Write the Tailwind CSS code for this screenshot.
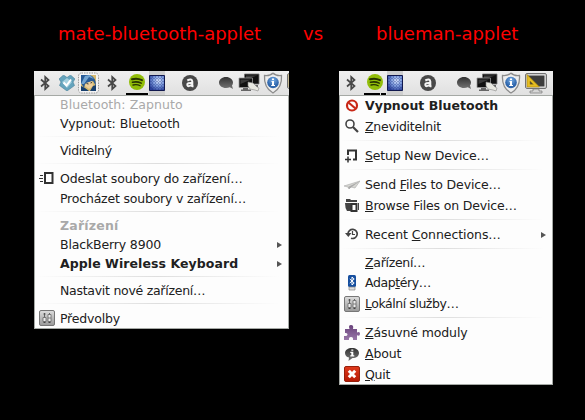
<!DOCTYPE html>
<html lang="cs">
<head>
<meta charset="utf-8">
<title>Bluetooth applets</title>
<script src="https://cdn.jsdelivr.net/npm/@tailwindcss/browser@4"></script>
</head>
<body class="w-[585px] h-[420px] overflow-hidden bg-black font-['DejaVu_Sans','Noto_Sans',sans-serif] text-[12.5px] leading-[19px] text-[#202020] whitespace-nowrap">
<svg class="absolute w-0 h-0">
  <defs>
    <linearGradient id="dk" x2="0" y2="1"><stop stop-color="#333"/><stop offset="1" stop-color="#777"/></linearGradient>
    <linearGradient id="metal" x2="0" y2="1"><stop stop-color="#ddd"/><stop offset="1" stop-color="#999"/></linearGradient>
    <linearGradient id="redg" x2="0" y2="1"><stop stop-color="#e03a1c"/><stop offset="1" stop-color="#b51a05"/></linearGradient>
    <linearGradient id="pur" x2="0" y2="1"><stop stop-color="#68417a"/><stop offset="1" stop-color="#9a78aa"/></linearGradient>
    <radialGradient id="grid" cx=".6" cy=".35" r=".7"><stop stop-color="#d5e2fb"/><stop offset=".5" stop-color="#7c9adb"/><stop offset="1" stop-color="#2a3f98"/></radialGradient>
    <radialGradient id="blu" cy=".3"><stop stop-color="#79aee5"/><stop offset="1" stop-color="#2f66ac"/></radialGradient>
  </defs>
  <symbol id="bt" viewBox="0 0 12 18"><path d="M2 5.500 9.500 12 6.200 15V3l3.300 3L2 12.500" fill="none" stroke="#484848" stroke-width="1.7"/></symbol>
  <symbol id="spot" viewBox="0 0 22 24"><circle cx="11" cy="11" r="8" fill="#91bd09"/><g fill="none" stroke="#273400" stroke-linecap="round"><path d="M6 8.300q5-1.600 10 .8" stroke-width="2"/><path d="M6.500 11.300q4.500-1.200 8.700.8" stroke-width="1.600"/><path d="M7 14q4-1 7.200.7" stroke-width="1.300"/></g></symbol>
  <symbol id="gridicon" viewBox="0 0 16 24"><path fill="#cfcfcf" d="M0 0h16v24H0z"/><path fill="url(#grid)" stroke="#10184e" d="M.5 4.500h15v15H.5z"/><path d="M3.500 5v14M6.500 5v14M9.500 5v14M12.500 5v14M1 7.500h14M1 10.500h14M1 13.500h14M1 16.500h14" stroke="#1d3185" stroke-opacity=".35" stroke-dasharray="2 1"/></symbol>
  <symbol id="acirc" viewBox="0 0 16 16"><circle cx="8" cy="8" r="8" fill="#494949"/><path d="M5.300 5.500q4.700-2.600 5 1.200V12M10.300 8Q5 7.500 5.300 10q.7 2.500 5-.5M10 11.300h1.500" fill="none" stroke="#f4f4f4" stroke-width="2"/></symbol>
  <symbol id="bub" viewBox="0 0 14 14"><path d="M7 1C3 1 0 3.500 0 6.500S3 12 7 12c1.500 0 2.800-.3 3.800-.8L14 13l-1-3.500c.6-.8 1-1.800 1-3C14 3.500 11 1 7 1" fill="url(#dk)"/></symbol>
  <symbol id="mon" viewBox="0 0 22 20"><path fill="#111" stroke="#777" stroke-width=".8" d="M6.500 1h14.500v10H6.500z"/><path fill="#3c3c3c" d="M8 2.500h11.500L8 6z"/><path fill="#111" stroke="#999" stroke-width=".8" d="M1 5h13.500v9.500H1z"/><path fill="#393939" d="M2.500 6.500H13L2.500 11z"/><path fill="#666" d="M5 15h5v1.500h3V18H3v-1.500h2zM14 12h6v2h-6z"/><path d="m10 9 5 1 4 4 2 1-1 3-3-1-5-1-2-3z" fill="#e9e9e2" stroke="#888" stroke-width=".6"/></symbol>
  <symbol id="shield" viewBox="0 0 20 22"><path d="M10 1Q7.500 4 1.500 3.500C1 11 3 17 10 21c7-4 9-10 8.500-17.500Q12.500 4 10 1" fill="#eee" stroke="#8c8c8c" stroke-width="1.300"/><circle cx="10" cy="10.500" r="5.800" fill="url(#blu)"/><path d="M9 6.500h2V8H9zM8.500 9H11v4h1v1H8.200v-1H9v-3h-.5z" fill="#fff"/></symbol>
  <symbol id="desk" viewBox="0 0 22 22"><rect x=".7" y="1.700" width="20.600" height="14.600" rx="1" fill="#eee" stroke="#555"/><path fill="#3d3d3d" d="M2.500 3.500h17v11h-17z"/><path d="M2 2.500 14.500 15H2zM5 9v3.300h3.300z" fill="#e5bd22" stroke="#a98508" stroke-width=".6" fill-rule="evenodd"/><path d="M8 17h6v2h3v2H5v-2h3z" fill="#d6d6d6" stroke="#777" stroke-width=".7"/></symbol>
  <symbol id="slid" viewBox="0 0 16 16"><rect x=".5" y=".5" width="15" height="15" rx="1.500" fill="url(#metal)" stroke="#777"/><path d="M5.500 3v10M10.500 3v10" stroke="#666"/><path d="M4 7.500h3v4H4zM9 4.500h3v7H9zM9 8h3" fill="#eee" stroke="#666" stroke-width=".8"/><path d="M4.500 4h2M4.500 12.500h2M9.500 12.500h2" stroke="#444"/></symbol>
</svg>

<header class="h-[71px] flex pt-[23px] pl-[58px] text-[18px] leading-[21px] text-[#ff0000]">
  <h1 class="w-[245px]">mate-bluetooth-applet</h1>
  <span class="w-[73px]">vs</span>
  <h1>blueman-applet</h1>
</header>

<main class="flex items-start pl-[34px] gap-[50px]">
  <section class="w-[255px] overflow-hidden">
    <div class="h-[24px] flex items-center bg-linear-to-b from-[#efefef] to-[#e1e1e1] pl-[5px] *:shrink-0">
      <svg class="w-[12px] h-[18px]"><use href="#bt"/></svg>
      <svg class="w-[16px] h-[16px] ml-[8px]" viewBox="0 0 16 16"><path d="m4.500 0 3.500 2.500L11.500 0 16 4l-2 3 1.500 3.500L8 16 .5 10.500 2 7 0 4z" fill="#65a4bd" stroke="#487f98" stroke-width=".6"/><path d="m8 3 5 4-5 6-5-6z" fill="#a5d0df"/><path d="m4.500 7.500 3 3L12 4.500" fill="none" stroke="#fff" stroke-width="2"/></svg>
      <svg class="w-[21px] h-[22px] ml-[3px]" viewBox="0 0 21 22"><rect x=".5" y="1" width="20" height="20" rx="3" fill="#f3f3f3" stroke="#999" stroke-dasharray="1.500 1"/><path fill="#d5b96f" d="M3 3h15v16H3z"/><path d="M3 3h9q6 2 6 11l-3-5-8 3-1 4-3-5z" fill="#285b96"/><path d="M3 12l4-8 5-1 4 4-5-2-5 7z" fill="#73a5d2"/><path d="m8 11 6-2 1 5-4 3-4-3z" fill="#edcf9c"/><path d="M3 14q5 2 8 5H3zM15 14l3-1v6h-6z" fill="#173f6e"/><path d="m8.500 11.500 2 .5m2-1 1.500-.5" stroke="#333"/></svg>
      <svg class="w-[12px] h-[18px] ml-[7px]"><use href="#bt"/></svg>
      <div class="w-[22px] h-[24px] ml-[8px] flex flex-col"><svg class="w-[22px] h-[24px] -mb-[2px] shrink-0"><use href="#spot"/></svg><div class="h-[2px] shrink-0 bg-black"></div></div>
      <svg class="w-[16px] h-[24px] ml-[1px]"><use href="#gridicon"/></svg>
      <svg class="w-[16px] h-[16px] ml-[17px]"><use href="#acirc"/></svg>
      <svg class="w-[14px] h-[14px] ml-[21px]"><use href="#bub"/></svg>
      <svg class="w-[22px] h-[20px] ml-[5px]"><use href="#mon"/></svg>
      <svg class="w-[20px] h-[22px] ml-[3px]"><use href="#shield"/></svg>
      <svg class="w-[22px] h-[22px] ml-[4px]"><use href="#desk"/></svg>
    </div>
    <div class="h-[234px] bg-[#fdfdfd] border border-[#a5a9a5] flex flex-col *:shrink-0">
      <div class="h-[16px] mb-[2px] flex items-center pl-[25px] text-[#a9a9a9] tracking-[0.07px]">Bluetooth: Zapnuto</div>
      <div class="h-[19px] flex items-center pl-[25px] tracking-[-0.05px]"><span>Vypnout: Bluetooth</span></div>
      <div class="h-[8px] pt-[3px] pr-[8px]"><div class="h-px bg-linear-to-r from-transparent via-[#dedede] to-transparent"></div></div>
      <div class="h-[19px] flex items-center pl-[25px] tracking-[-0.3px]"><span>Viditelný</span></div>
      <div class="h-[8px] pt-[3px] pr-[8px]"><div class="h-px bg-linear-to-r from-transparent via-[#dedede] to-transparent"></div></div>
      <div class="h-[20px] flex items-center pl-[4px] tracking-[-0.15px]"><svg class="w-[16px] h-[14px] mr-[5px]" viewBox="0 0 16 14"><path d="M6 2h7.500v10H6z" fill="#fff" stroke="#333" stroke-width="2"/><path d="M1 4.500h3M0 7.500h4M1 10.500h3" stroke="#333"/></svg><span>Odeslat soubory do zařízení…</span></div>
      <div class="h-[20px] flex items-center pl-[25px] tracking-[-0.2px]"><span>Procházet soubory v zařízení…</span></div>
      <div class="h-[8px] pt-[3px] pr-[8px]"><div class="h-px bg-linear-to-r from-transparent via-[#dedede] to-transparent"></div></div>
      <div class="h-[19px] flex items-center pl-[25px] font-bold text-[#a9a9a9] tracking-[0.2px]"><span>Zařízení</span></div>
      <div class="h-[19px] flex items-center justify-between pl-[25px] pr-[6px] tracking-[-0.15px]"><span>BlackBerry 8900</span><svg class="w-[5px] h-[6px]" viewBox="0 0 5 6"><path d="m0 0 5 3-5 3z" fill="#555"/></svg></div>
      <div class="h-[19px] flex items-center justify-between pl-[25px] pr-[6px] tracking-[0.07px]"><span class="font-bold">Apple Wireless Keyboard</span><svg class="w-[5px] h-[6px]" viewBox="0 0 5 6"><path d="m0 0 5 3-5 3z" fill="#555"/></svg></div>
      <div class="h-[8px] pt-[3px] pr-[8px]"><div class="h-px bg-linear-to-r from-transparent via-[#dedede] to-transparent"></div></div>
      <div class="h-[19px] flex items-center pl-[25px] tracking-[-0.27px]"><span>Nastavit nové zařízení…</span></div>
      <div class="h-[8px] pt-[3px] pr-[8px]"><div class="h-px bg-linear-to-r from-transparent via-[#dedede] to-transparent"></div></div>
      <div class="h-[20px] flex items-center pl-[4px] tracking-[-0.2px]"><svg class="w-[16px] h-[16px] mr-[5px]"><use href="#slid"/></svg><span>Předvolby</span></div>
    </div>
  </section>

  <section class="w-[214px] overflow-hidden">
    <div class="h-[24px] flex items-center bg-linear-to-b from-[#efefef] to-[#e1e1e1] pl-[6px] *:shrink-0">
      <svg class="w-[12px] h-[18px]"><use href="#bt"/></svg>
      <div class="w-[22px] h-[24px] ml-[7px] flex flex-col"><svg class="w-[22px] h-[24px] -mb-[2px] shrink-0"><use href="#spot"/></svg><div class="h-[2px] shrink-0 flex gap-px"><i class="w-[16px] bg-black"></i><i class="w-[5px] bg-black"></i></div></div>
      <svg class="w-[16px] h-[24px] ml-[1px]"><use href="#gridicon"/></svg>
      <svg class="w-[16px] h-[16px] ml-[17px]"><use href="#acirc"/></svg>
      <svg class="w-[14px] h-[14px] ml-[21px]"><use href="#bub"/></svg>
      <svg class="w-[22px] h-[20px] ml-[5px]"><use href="#mon"/></svg>
      <svg class="w-[20px] h-[22px] ml-[3px]"><use href="#shield"/></svg>
      <svg class="w-[22px] h-[22px] ml-[4px]"><use href="#desk"/></svg>
    </div>
    <div class="h-[290px] bg-[#fdfdfd] border border-[#a5a9a5] flex flex-col *:shrink-0">
      <div class="h-[19px] flex items-center pl-[4px] tracking-[0.03px]"><svg class="w-[16px] h-[16px] mr-[5px]" viewBox="0 0 16 16"><circle cx="8" cy="7.500" r="5" fill="#fff" stroke="#c92817" stroke-width="2.200"/><path d="m4.500 4.500 7 6" stroke="#c92817" stroke-width="2.200"/></svg><span class="font-bold">Vypnout Bluetooth</span></div>
      <div class="h-[22px] flex items-center pl-[4px] tracking-[-0.23px]"><svg class="w-[16px] h-[16px] mr-[5px]" viewBox="0 0 16 16"><circle cx="6" cy="6" r="4" fill="none" stroke="#444" stroke-width="1.600"/><path d="m9 9 5 5" stroke="#444" stroke-width="2.200"/></svg><span><u>Z</u>neviditelnit</span></div>
      <div class="h-[8px] pt-[3px] pr-[8px]"><div class="h-px bg-linear-to-r from-transparent via-[#dedede] to-transparent"></div></div>
      <div class="h-[21px] flex items-center pl-[4px] tracking-[-0.18px]"><svg class="w-[16px] h-[16px] mr-[5px]" viewBox="0 0 16 16"><path d="M4 7V2.500h8v9H9" fill="none" stroke="#333" stroke-width="2"/><path d="M4 8.500v6M1 11.500h6" stroke="#333" stroke-width="1.500"/></svg><span><u>S</u>etup New Device…</span></div>
      <div class="h-[8px] pt-[3px] pr-[8px]"><div class="h-px bg-linear-to-r from-transparent via-[#dedede] to-transparent"></div></div>
      <div class="h-[21px] flex items-center pl-[4px] tracking-[-0.13px]"><svg class="w-[16px] h-[16px] mr-[5px]" viewBox="0 0 16 16"><path d="M0 9 16 4l-5 7-4-1-2 2-1-2z" fill="#d7d7d3" stroke="#aaa" stroke-width=".6"/><path d="M5 12 16 4 4 10z" fill="#aaa"/></svg><span>Send <u>F</u>iles to Device…</span></div>
      <div class="h-[21px] flex items-center pl-[4px] tracking-[-0.17px]"><svg class="w-[16px] h-[16px] mr-[5px]" viewBox="0 0 16 16"><path d="M2 1h4l1 1h6v2H2zM1 5h6v8H3q-2-3-2-8m13 0h1v7h-1z" fill="#444"/><path d="M7.500 6h5v7h-5z" fill="#fff" stroke="#333" stroke-width="2"/></svg><span><u>B</u>rowse Files on Device…</span></div>
      <div class="h-[8px] pt-[3px] pr-[8px]"><div class="h-px bg-linear-to-r from-transparent via-[#dedede] to-transparent"></div></div>
      <div class="h-[21px] flex items-center pl-[4px] pr-[6px] tracking-[-0.06px]"><svg class="w-[16px] h-[16px] mr-[5px]" viewBox="0 0 16 16"><path d="M4 7a4.600 4.600 0 1 1 3 4.200" fill="none" stroke="#444" stroke-width="1.700"/><path d="M1 6h6.500L4.300 10z" fill="#444"/><path d="M8.500 4v3.500H11" fill="none" stroke="#444" stroke-width="1.200"/></svg><span class="grow">Recent <u>C</u>onnections…</span><svg class="w-[5px] h-[6px]" viewBox="0 0 5 6"><path d="m0 0 5 3-5 3z" fill="#555"/></svg></div>
      <div class="h-[8px] pt-[3px] pr-[8px]"><div class="h-px bg-linear-to-r from-transparent via-[#dedede] to-transparent"></div></div>
      <div class="h-[19px] flex items-center pl-[25px] tracking-[-0.3px]"><span><u>Z</u>ařízení…</span></div>
      <div class="h-[21px] flex items-center pl-[4px] tracking-[-0.4px]"><svg class="w-[16px] h-[16px] mr-[5px]" viewBox="0 0 16 16"><rect x="4" y="0" width="8" height="12" rx="1.500" fill="#164f9f"/><path d="M5 12h6v3H5z" fill="#ddd" stroke="#888" stroke-width=".7"/><path d="m5.800 4 4.400 4L8 10V2l2.200 2-4.400 4" fill="none" stroke="#fff"/></svg><span>Adap<u>t</u>éry…</span></div>
      <div class="h-[21px] flex items-center pl-[4px] tracking-[-0.45px]"><svg class="w-[16px] h-[16px] mr-[5px]"><use href="#slid"/></svg><span><u>L</u>okální služby…</span></div>
      <div class="h-[8px] pt-[3px] pr-[8px]"><div class="h-px bg-linear-to-r from-transparent via-[#dedede] to-transparent"></div></div>
      <div class="h-[21px] flex items-center pl-[4px] tracking-[-0.12px]"><svg class="w-[16px] h-[16px] mr-[5px]" viewBox="0 0 16 16"><path d="M1 4h4.500Q4 0 7 0t2 4H13v3.500q3-1.500 3 1.300t-3 1.500V15H9q.5-3-2-3t-2 3H0v-4q3.500.5 3.500-1.500T1 8z" fill="url(#pur)"/></svg><span><u>Z</u>ásuvné moduly</span></div>
      <div class="h-[21px] flex items-center pl-[4px] tracking-[-0.15px]"><svg class="w-[16px] h-[16px] mr-[5px]" viewBox="0 0 16 16"><path d="M8 2C4 2 1 4 1 7c0 2.300 1.500 4 4 4.600L4.500 15 8.500 12C12.500 12 15 10 15 7s-3-5-7-5" fill="url(#dk)"/><path d="M7.300 3.500h2v1.300h-2zM6.300 5.700h3v3.500h1v1.200H6.300V9.200h1V7h-1z" fill="#fff"/></svg><span><u>A</u>bout</span></div>
      <div class="h-[20px] flex items-center pl-[4px] tracking-[-0.25px]"><svg class="w-[16px] h-[16px] mr-[5px]" viewBox="0 0 16 16"><rect x=".5" y=".5" width="15" height="15" rx="1.500" fill="url(#redg)" stroke="#96200d"/><path d="m4.800 4.800 6.400 6.400m0-6.400-6.400 6.400" stroke="#fff" stroke-width="3"/></svg><span><u>Q</u>uit</span></div>
    </div>
  </section>
</main>
</body>
</html>
